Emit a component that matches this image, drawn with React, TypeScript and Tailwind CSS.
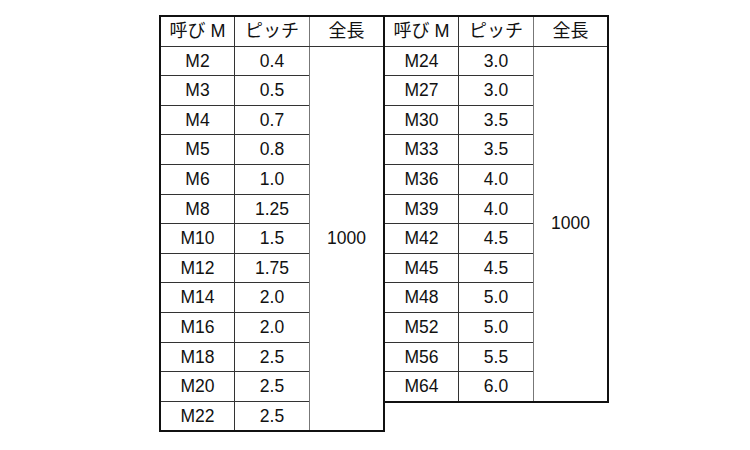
import React from "react";

const left: [string, string][] = [
  ["M2", "0.4"], ["M3", "0.5"], ["M4", "0.7"], ["M5", "0.8"], ["M6", "1.0"],
  ["M8", "1.25"], ["M10", "1.5"], ["M12", "1.75"], ["M14", "2.0"], ["M16", "2.0"],
  ["M18", "2.5"], ["M20", "2.5"], ["M22", "2.5"],
];
const right: [string, string][] = [
  ["M24", "3.0"], ["M27", "3.0"], ["M30", "3.5"], ["M33", "3.5"], ["M36", "4.0"],
  ["M39", "4.0"], ["M42", "4.5"], ["M45", "4.5"], ["M48", "5.0"], ["M52", "5.0"],
  ["M56", "5.5"], ["M64", "6.0"],
];

function Table({ rows, cls }: { rows: [string, string][]; cls: string }) {
  return (
    <div className={cls}>
      <div className="flex h-[29.6px] border-b border-[#333] text-[18px]">
        <div className="w-[74px] flex items-center justify-center border-r border-[#333]">呼び M</div>
        <div className="w-[75px] flex items-center justify-center border-r border-[#777]">ピッチ</div>
        <div className="flex-1 flex items-center justify-center">全長</div>
      </div>
      <div className="flex">
        <div className="w-[149px] border-r border-[#777]">
          {rows.map(([m, p], i) => (
            <div
              key={m}
              className={
                i === rows.length - 1
                  ? "flex h-[28.6px]"
                  : "flex h-[29.6px] border-b border-[#333]"
              }
            >
              <div className="w-[74px] flex items-center justify-center border-r border-[#333] pt-[1px]">{m}</div>
              <div className="flex-1 flex items-center justify-center pt-[1px]">{p}</div>
            </div>
          ))}
        </div>
        <div className="flex-1 flex items-center justify-center">1000</div>
      </div>
    </div>
  );
}

export default function App() {
  return (
    <div
      className="w-[750px] h-[450px] bg-white text-[#111] text-[17.5px] leading-none"
      style={{ fontFamily: '"Liberation Sans", Arial, "Noto Sans CJK JP", sans-serif' }}
    >
      <div className="flex items-start pl-[159px] pt-[15px]">
        <Table rows={left} cls="w-[226px] border-2 border-[#111]" />
        <Table rows={right} cls="w-[224px] border-2 border-l-0 border-[#111]" />
      </div>
    </div>
  );
}
